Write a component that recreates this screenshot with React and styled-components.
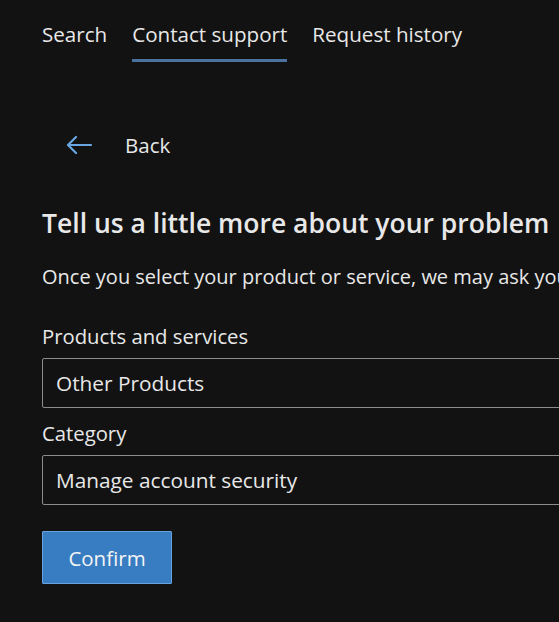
import styled, { createGlobalStyle } from "styled-components";

const Global = createGlobalStyle`
  html, body {
    margin: 0;
    background: #121212;
    overflow: hidden;
  }
  body {
    font-family: "Open Sans", "Noto Sans", sans-serif;
    color: #e8e8e8;
  }
`;

const Page = styled.div`
  padding: 0 0 0 42px;
  width: 760px;
`;

const Tabs = styled.nav`
  display: flex;
  gap: 25px;
  padding-top: 19px;
`;

const Tab = styled.div`
  font-size: 20.6px;
  line-height: 30px;
  padding-bottom: 10px;
  border-bottom: 3px solid ${(p) => (p.active ? "#4b729f" : "transparent")};
`;

const BackRow = styled.button`
  display: flex;
  align-items: center;
  gap: 33px;
  margin: 68px 0 0 24px;
  padding: 0;
  background: none;
  border: none;
  color: #e8e8e8;
  font-family: inherit;
  font-size: 20.5px;
  line-height: 30px;
`;

const Heading = styled.h2`
  margin: 45px 0 0;
  font-size: 26.5px;
  font-weight: 600;
  line-height: 36px;
  white-space: nowrap;
`;

const Intro = styled.p`
  margin: 21px 0 0;
  font-size: 20px;
  line-height: 30px;
  white-space: nowrap;
`;

const Label = styled.div`
  margin-top: ${(p) => p.top}px;
  font-size: 20.3px;
  line-height: 30px;
`;

const Field = styled.div`
  margin-top: 7px;
  height: 50px;
  width: 680px;
  box-sizing: border-box;
  border: 1px solid #8c8c8c;
  border-radius: 2px;
  display: flex;
  align-items: center;
  padding-left: 13px;
  font-size: 20.8px;
`;

const Confirm = styled.button`
  margin-top: 26px;
  width: 130px;
  height: 53px;
  background: #387dc1;
  border: 1px solid #66a3df;
  border-radius: 1px;
  color: #f4f4f4;
  font-family: inherit;
  font-size: 20.5px;
`;

export default function App() {
  return (
    <>
      <Global />
      <Page>
        <Tabs>
          <Tab>Search</Tab>
          <Tab active>Contact support</Tab>
          <Tab>Request history</Tab>
        </Tabs>
        <BackRow>
          <svg width="26" height="20" viewBox="0 0 26 20" fill="none">
            <path d="M25 10H2M10 2L2 10l8 8" stroke="#6aa6e0" strokeWidth="2.2" strokeLinecap="round" strokeLinejoin="round" />
          </svg>
          Back
        </BackRow>
        <Heading>Tell us a little more about your problem</Heading>
        <Intro>Once you select your product or service, we may ask you a few more questions.</Intro>
        <Label top={29}>Products and services</Label>
        <Field>Other Products</Field>
        <Label top={10}>Category</Label>
        <Field>Manage account security</Field>
        <Confirm>Confirm</Confirm>
      </Page>
    </>
  );
}
